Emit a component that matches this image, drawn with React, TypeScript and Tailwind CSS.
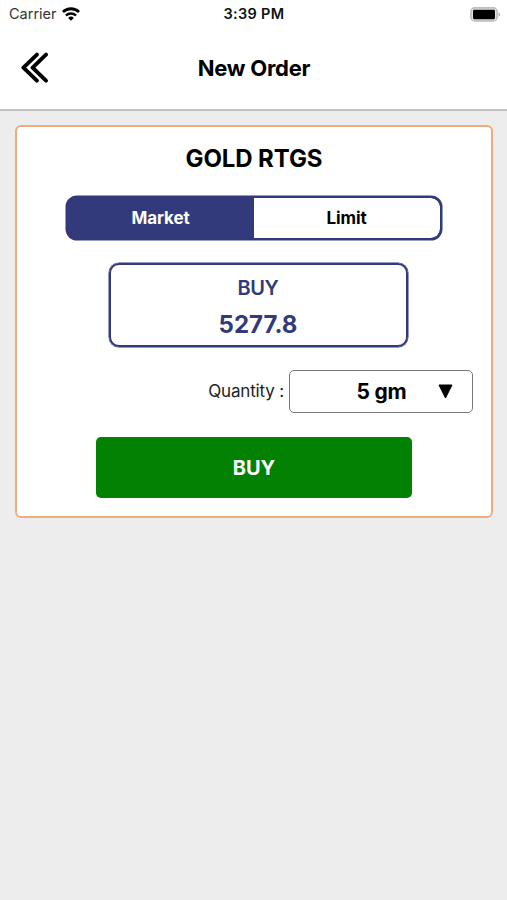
import { useState } from "react";

const orderTypes = ["Market", "Limit"];

function WifiIcon() {
  return (
    <svg width="18" height="14" viewBox="0 0 18 14" fill="none" stroke="#000" strokeWidth="2.8">
      <path d="M0.9 5a11.7 11.7 0 0 1 16.2 0" />
      <path d="M3.9 8.5a7.4 7.4 0 0 1 10.2 0" strokeWidth="2.4" />
      <path d="M9 13.8l-2.8-2.9a4 4 0 0 1 5.6 0z" fill="#000" stroke="none" />
    </svg>
  );
}

function BatteryIcon() {
  return (
    <svg width="31" height="15" viewBox="0 0 31 15">
      <rect x="0.9" y="0.9" width="26.2" height="13" rx="3.8" fill="#e4e4e4" stroke="#bdbdbd" strokeWidth="1.6" />
      <rect x="3" y="2.8" width="22" height="9.4" rx="1.4" fill="#000" />
      <path d="M28.6 5.2c1.8.6 1.8 3.8 0 4.4z" fill="#a6a6a6" />
    </svg>
  );
}

function BackIcon() {
  return (
    <svg width="28" height="32" viewBox="0 0 28 32" fill="none" stroke="#000" strokeWidth="3.9" strokeLinecap="round" strokeLinejoin="round">
      <path d="M15.9 2.6L2.4 15.6l13.5 13" />
      <path d="M25 2.6L11.6 15.6l13.4 13" />
    </svg>
  );
}

function StatusBar() {
  return (
    <div className="grid h-7 grid-cols-[1fr_auto_1fr] items-center pl-[9px] pr-[6px] text-[14.5px] leading-none">
      <div className="flex items-center gap-[5px]">
        <span className="text-[#333]">Carrier</span>
        <WifiIcon />
      </div>
      <span className="mr-[2px] font-semibold tracking-[0.02em] text-[#111]">3:39 PM</span>
      <div className="flex justify-end">
        <BatteryIcon />
      </div>
    </div>
  );
}

export default function App() {
  const [orderType, setOrderType] = useState("Market");

  return (
    <div className="min-h-screen bg-[#ededed] font-['Inter',sans-serif] text-black">
      <header className="h-[111px] border-b-2 border-[#c1c1c1] bg-white">
        <StatusBar />
        <div className="grid h-20 grid-cols-[1fr_auto_1fr] items-center pl-[21px] pr-[20px]">
          <button aria-label="Back" className="w-7">
            <BackIcon />
          </button>
          <h1 className="text-[22px] font-bold leading-none tracking-[-0.012em]">New Order</h1>
        </div>
      </header>

      <main className="px-[15px] pt-[14px]">
        <section className="flex h-[393px] w-[478px] flex-col items-center rounded-[6px] border-2 border-[#f0ac7f] bg-white">
          <h2 className="mt-[17px] text-[24px] font-bold leading-[30px] tracking-[-0.005em]">GOLD RTGS</h2>

          {/* Order type */}
          <div className="mr-px mt-[22px] flex h-[44px] w-[376px] overflow-hidden rounded-[11px] border-2 border-[#333a7b] bg-[#333a7b] shadow-[0_0_0_0.5px_#333a7b]">
            {orderTypes.map((type) => (
              <button
                key={type}
                onClick={() => setOrderType(type)}
                className={`flex-1 text-[17px] font-bold leading-none tracking-[-0.005em] first:rounded-l-[9px] last:rounded-r-[9px] ${
                  orderType === type ? "bg-[#333a7b] text-white" : "bg-white text-black"
                }`}
              >
                {type}
              </button>
            ))}
          </div>

          {/* Live price */}
          <div className="ml-2 mt-[23px] flex h-[84px] w-[299px] flex-col items-center rounded-[10px] border-2 border-[#333a7b] text-[#333a7b] shadow-[0_0_0_0.5px_#333a7b]">
            <span className="mt-[11px] text-[20px] font-semibold leading-6 tracking-[-0.02em]">BUY</span>
            <span className="mt-[10px] text-[24px] font-bold leading-[30px]">5277.8</span>
          </div>

          <div className="mt-[23px] flex w-full items-center justify-end gap-[5px] pr-[18px]">
            <span className="text-[17px] tracking-[-0.01em] text-[#222]">Quantity :</span>
            <button className="flex h-[43px] w-[184px] items-center rounded-[5px] border border-[#777] pr-[19px]">
              <span className="flex-1 pl-[35px] text-center text-[21px] font-bold leading-none tracking-[-0.01em]">5 gm</span>
              <svg width="15" height="15" viewBox="0 0 15 15">
                <path d="M1 1h13L7.5 14z" fill="#000" stroke="#000" strokeLinejoin="round" />
              </svg>
            </button>
          </div>

          <button className="mt-6 h-[61px] w-[316px] rounded-[5px] bg-[#028102] text-[20px] font-bold leading-none text-white">
            BUY
          </button>
        </section>
      </main>
    </div>
  );
}
